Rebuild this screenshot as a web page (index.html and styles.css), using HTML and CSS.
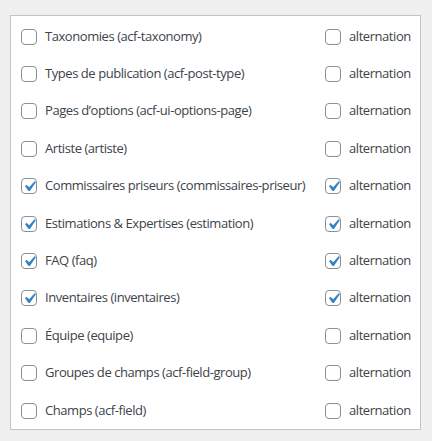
FILE: index.html
```html
<!DOCTYPE html>
<html lang="fr">
<head>
<meta charset="utf-8">
<title>Types</title>
<link rel="stylesheet" href="styles.css">
</head>
<body>
<div class="box">
  <div class="row"><label class="item"><span class="cb"></span><span>Taxonomies (acf-taxonomy)</span></label><label class="item alt"><span class="cb"></span><span>alternation</span></label></div>
  <div class="row"><label class="item"><span class="cb"></span><span>Types de publication (acf-post-type)</span></label><label class="item alt"><span class="cb"></span><span>alternation</span></label></div>
  <div class="row"><label class="item"><span class="cb"></span><span>Pages d’options (acf-ui-options-page)</span></label><label class="item alt"><span class="cb"></span><span>alternation</span></label></div>
  <div class="row"><label class="item"><span class="cb"></span><span>Artiste (artiste)</span></label><label class="item alt"><span class="cb"></span><span>alternation</span></label></div>
  <div class="row"><label class="item"><span class="cb"><svg viewBox="0 0 20 20"><path d="M14.83 4.89l1.34.94-5.81 8.38H9.02L5.78 9.67l1.34-1.25 2.57 2.4z"/></svg></span><span>Commissaires priseurs (commissaires-priseur)</span></label><label class="item alt"><span class="cb"><svg viewBox="0 0 20 20"><path d="M14.83 4.89l1.34.94-5.81 8.38H9.02L5.78 9.67l1.34-1.25 2.57 2.4z"/></svg></span><span>alternation</span></label></div>
  <div class="row"><label class="item"><span class="cb"><svg viewBox="0 0 20 20"><path d="M14.83 4.89l1.34.94-5.81 8.38H9.02L5.78 9.67l1.34-1.25 2.57 2.4z"/></svg></span><span>Estimations &amp; Expertises (estimation)</span></label><label class="item alt"><span class="cb"><svg viewBox="0 0 20 20"><path d="M14.83 4.89l1.34.94-5.81 8.38H9.02L5.78 9.67l1.34-1.25 2.57 2.4z"/></svg></span><span>alternation</span></label></div>
  <div class="row"><label class="item"><span class="cb"><svg viewBox="0 0 20 20"><path d="M14.83 4.89l1.34.94-5.81 8.38H9.02L5.78 9.67l1.34-1.25 2.57 2.4z"/></svg></span><span>FAQ (faq)</span></label><label class="item alt"><span class="cb"><svg viewBox="0 0 20 20"><path d="M14.83 4.89l1.34.94-5.81 8.38H9.02L5.78 9.67l1.34-1.25 2.57 2.4z"/></svg></span><span>alternation</span></label></div>
  <div class="row"><label class="item"><span class="cb"><svg viewBox="0 0 20 20"><path d="M14.83 4.89l1.34.94-5.81 8.38H9.02L5.78 9.67l1.34-1.25 2.57 2.4z"/></svg></span><span>Inventaires (inventaires)</span></label><label class="item alt"><span class="cb"><svg viewBox="0 0 20 20"><path d="M14.83 4.89l1.34.94-5.81 8.38H9.02L5.78 9.67l1.34-1.25 2.57 2.4z"/></svg></span><span>alternation</span></label></div>
  <div class="row"><label class="item"><span class="cb"></span><span>Équipe (equipe)</span></label><label class="item alt"><span class="cb"></span><span>alternation</span></label></div>
  <div class="row"><label class="item"><span class="cb"></span><span>Groupes de champs (acf-field-group)</span></label><label class="item alt"><span class="cb"></span><span>alternation</span></label></div>
  <div class="row"><label class="item"><span class="cb"></span><span>Champs (acf-field)</span></label><label class="item alt"><span class="cb"></span><span>alternation</span></label></div>
</div>
</body>
</html>
```
FILE: styles.css
```css
html, body {
  margin: 0;
  background: #f0f0f1;
}
body {
  padding: 15px 0 0 10px;
  font-family: "Open Sans", "Noto Sans", sans-serif;
  font-size: 13px;
  letter-spacing: -0.44px;
  color: #3c434a;
}
.box {
  width: 409px;
  height: 412px;
  box-sizing: content-box;
  background: #fff;
  border: 1px solid #c3c4c7;
  padding: 1px 0 0 0;
}
.row {
  display: grid;
  grid-template-columns: 314px 1fr;
  height: 37.4px;
  align-items: center;
}
.item {
  display: flex;
  align-items: center;
  gap: 8px;
  padding-left: 10px;
  white-space: nowrap;
}
.alt {
  padding-left: 0;
}
.cb {
  width: 14px;
  height: 14px;
  margin-top: 2px;
  border: 1px solid #8c8f94;
  border-radius: 4px;
  background: #fff;
  position: relative;
  flex: none;
}
.cb svg {
  position: absolute;
  left: -3px;
  top: -3px;
  width: 21px;
  height: 21px;
  fill: #3582c4;
}
```
